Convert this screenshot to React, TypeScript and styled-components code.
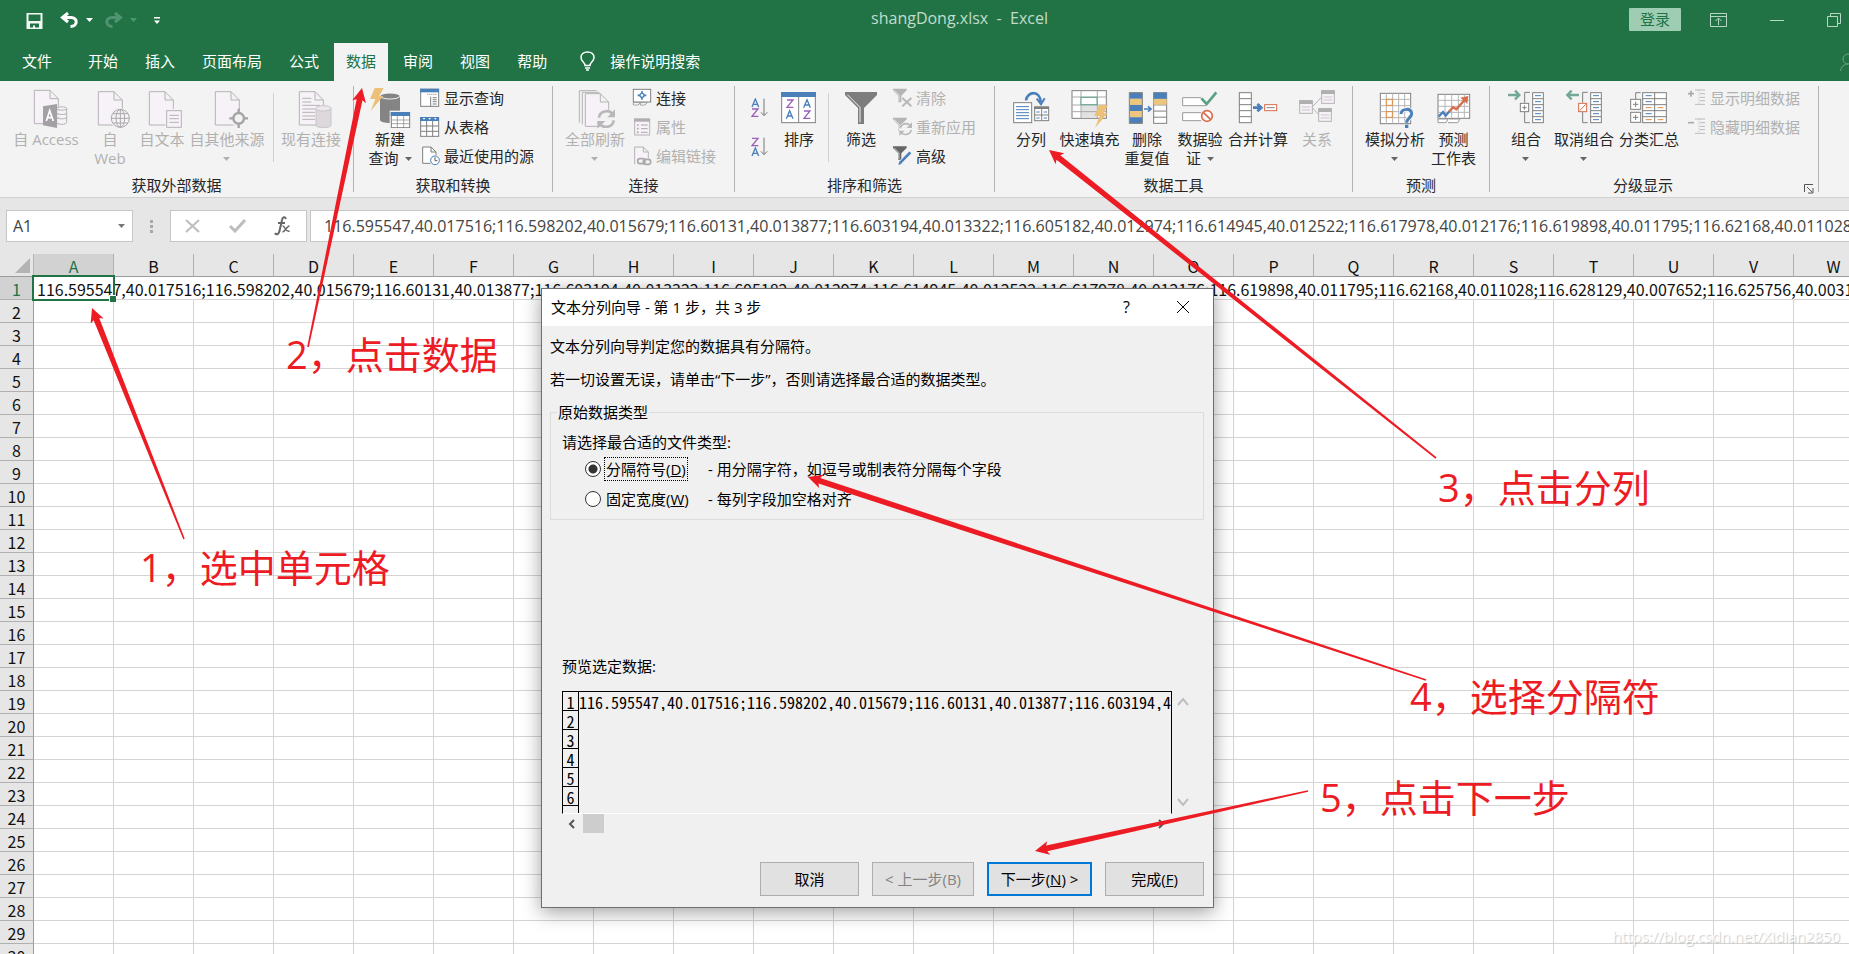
import React from "react";
import styled, { createGlobalStyle, css } from "styled-components";

const GREEN = "#217346";
const UI_FONT = `"Open Sans", "Noto Sans CJK SC", sans-serif`;
const CJK_FONT = `"Noto Sans CJK SC", "Open Sans", sans-serif`;
const BLUE = "#4a7fba";
const GREY = "#7f7f7f";
const FADED = "#b5b3b5";
const PALE = "#f6f2f7";
const RED = "#ed1c24";

const VALUE =
  "116.595547,40.017516;116.598202,40.015679;116.60131,40.013877;116.603194,40.013322;116.605182,40.012974;116.614945,40.012522;116.617978,40.012176;116.619898,40.011795;116.62168,40.011028;116.628129,40.007652;116.625756,40.003176";

const GlobalStyle = createGlobalStyle`
  * { box-sizing: border-box; }
  body { margin: 0; overflow: hidden; font-family: ${UI_FONT}; font-size: 15px; color: #262626; }
  button, input { font: inherit; color: inherit; margin: 0; }
  button { border: 0; padding: 0; background: none; }
  svg { display: block; flex: none; }
  p { margin: 0; }
`;

/* ---------- window frame ---------- */

const Window = styled.div`
  position: relative;
  display: flex;
  flex-direction: column;
  height: 100vh;
  overflow: hidden;
  background: #e6e6e6;
`;

const TitleBar = styled.header`
  display: flex;
  align-items: flex-start;
  height: 43px;
  flex: none;
  padding: 8px 8px 0 0;
  background: ${GREEN};
  color: #c2dccd;
`;

const QuickAccess = styled.div`
  display: flex;
  align-items: center;
  flex: 0 0 290px;
  height: 24px;
  padding-left: 26px;
`;

const QuickButton = styled.button<{ $gap: number }>`
  display: flex;
  margin-right: ${(p) => p.$gap}px;
`;

const DocTitle = styled.h1`
  flex: 1;
  margin: 0;
  font-size: 16px;
  font-weight: 400;
  line-height: 20px;
  text-align: center;
  white-space: pre;
`;

const WindowControls = styled.div`
  display: flex;
  align-items: center;
  gap: 43px;
  height: 23px;
`;

const SignIn = styled.button`
  width: 52px;
  height: 23px;
  margin-right: -14px;
  border-radius: 1px;
  background: #9fcdb3;
  color: ${GREEN};
  line-height: 21px;
`;

const IconButton = styled.button`
  display: flex;
`;

const TabBar = styled.nav`
  display: flex;
  align-items: stretch;
  gap: 3px;
  height: 38px;
  flex: none;
  padding-left: 10px;
  overflow: hidden;
  background: ${GREEN};
`;

const Tab = styled.button<{ $active?: boolean; $file?: boolean }>`
  flex: none;
  padding: 0 12px 3px;
  margin-right: ${(p) => (p.$file ? 9 : 0)}px;
  background: ${(p) => (p.$active ? "#f3f3f3" : "transparent")};
  color: ${(p) => (p.$active ? GREEN : "#fff")};
  line-height: 34px;
`;

const TellMe = styled.button`
  display: flex;
  align-items: center;
  gap: 15px;
  margin-left: 18px;
  padding-bottom: 3px;
  color: #fff;
`;

const Account = styled.button`
  display: flex;
  align-items: center;
  margin-left: auto;
`;

/* ---------- ribbon ---------- */

const Ribbon = styled.section`
  display: flex;
  height: 117px;
  flex: none;
  overflow: hidden;
  background: #f3f3f3;
  border-bottom: 1px solid #d0d0d0;
`;

const Group = styled.div<{ $width: number }>`
  display: flex;
  flex-direction: column;
  flex: none;
  width: ${(p) => p.$width}px;
`;

const GroupBody = styled.div<{ $pad: number }>`
  display: flex;
  height: 94px;
  padding-left: ${(p) => p.$pad}px;
`;

const Caption = styled.div`
  display: flex;
  align-items: center;
  height: 20px;
  line-height: 20px;
`;

const CaptionText = styled.span`
  flex: 1;
  text-align: center;
`;

const Launcher = styled.button`
  display: flex;
  width: 22px;
  padding: 7px 0 0 8px;
`;

const GroupRule = styled.div`
  flex: none;
  width: 1px;
  margin: 5px 0;
  background: #b3b3b3;
`;

const InnerRule = styled.div`
  flex: none;
  width: 1px;
  height: 69px;
  margin: 12px 5px 0;
  background: #d0d0d0;
`;

const BigButton = styled.button<{ $width: number; $off?: boolean }>`
  display: flex;
  flex-direction: column;
  align-items: center;
  gap: 2px;
  flex: none;
  width: ${(p) => p.$width}px;
  padding-top: 7px;
  color: ${(p) => (p.$off ? "#b1b1b1" : "#262626")};
`;

const BigLabel = styled.span`
  display: flex;
  flex-direction: column;
  align-items: center;
  line-height: 19px;
  white-space: nowrap;
`;

const LabelLine = styled.span`
  display: flex;
  align-items: center;
  gap: 6px;
  height: 19px;
`;

const SmallStack = styled.div<{ $gap?: number }>`
  display: flex;
  flex-direction: column;
  padding-top: 2px;
  margin-left: ${(p) => p.$gap ?? 0}px;
`;

const SmallButton = styled.button<{ $off?: boolean }>`
  display: flex;
  align-items: center;
  gap: 4px;
  height: 29px;
  white-space: nowrap;
  color: ${(p) => (p.$off ? "#b1b1b1" : "#262626")};
`;

const SortStack = styled.div`
  display: flex;
  flex-direction: column;
  gap: 19px;
  width: 24px;
  padding-top: 17px;
`;

/* ---------- formula bar ---------- */

const FormulaBar = styled.div`
  display: flex;
  flex: none;
  height: 56px;
  padding: 12px 0 12px 6px;
`;

const fieldBox = css`
  display: flex;
  align-items: center;
  background: #fff;
  border: 1px solid #c6c6c6;
`;

const NameBox = styled.div`
  ${fieldBox}
  flex: none;
  width: 127px;
  padding: 0 7px 0 6px;
`;

const NameInput = styled.input`
  flex: 1;
  min-width: 0;
  padding: 0;
  border: 0;
  outline: 0;
  color: #444;
  font-size: 16px;
`;

const Grip = styled.div`
  display: flex;
  justify-content: center;
  align-items: center;
  flex: none;
  width: 37px;
`;

const FormulaTools = styled.div`
  ${fieldBox}
  flex: none;
  gap: 28px;
  width: 137px;
  padding-left: 13px;
  margin-right: 3px;
`;

const FormulaInput = styled.input`
  ${fieldBox}
  flex: 1;
  min-width: 0;
  padding: 0 0 0 13px;
  border-right: 0;
  outline: 0;
  color: #444;
  font-size: 16px;
`;

/* ---------- sheet ---------- */

const SheetArea = styled.main`
  flex: 1;
  min-height: 0;
  overflow: hidden;
  background: #fff;
`;

const Sheet = styled.table`
  table-layout: fixed;
  width: 1954px;
  border-collapse: separate;
  border-spacing: 0;
  font-family: ${CJK_FONT};
  font-size: 16px;
  line-height: 20px;
  color: #111;
`;

const Corner = styled.td`
  width: 34px;
  height: 23px;
  padding: 0;
  background: #e6e6e6;
  border-right: 1px solid #b5b5b5;
  border-bottom: 1px solid #9b9b9b;
`;

const ColHead = styled.th<{ $on: boolean }>`
  width: 80px;
  height: 23px;
  padding: 2px 0 0;
  font-weight: 400;
  background: ${(p) => (p.$on ? "#d2d2d2" : "#e6e6e6")};
  color: ${(p) => (p.$on ? GREEN : "#111")};
  border-right: 1px solid #b0b0b0;
  border-bottom: 1px solid #9b9b9b;
`;

const RowHead = styled.th<{ $on: boolean }>`
  height: 23px;
  padding: 2px 0 0;
  font-weight: 400;
  background: ${(p) => (p.$on ? "#d2d2d2" : "#e6e6e6")};
  color: ${(p) => (p.$on ? GREEN : "#111")};
  border-right: 1px solid #9b9b9b;
  border-bottom: 1px solid #b0b0b0;
`;

const Cell = styled.td<{ $open?: boolean }>`
  padding: 0;
  border-right: 1px solid ${(p) => (p.$open ? "transparent" : "#d4d4d4")};
  border-bottom: 1px solid #d4d4d4;
`;

const ActiveCell = styled(Cell)`
  position: relative;
  padding: 2px 0 0 3px;
  white-space: nowrap;
  overflow: visible;
`;

const Selection = styled.div`
  position: absolute;
  inset: -2px;
  border: 2px solid ${GREEN};
  &::after {
    content: "";
    position: absolute;
    right: -3px;
    bottom: -3px;
    width: 6px;
    height: 6px;
    background: ${GREEN};
    border: solid #fff;
    border-width: 1px 0 0 1px;
  }
`;

/* ---------- wizard dialog ---------- */

const Dialog = styled.section`
  position: absolute;
  left: 541px;
  top: 288px;
  width: 673px;
  background: #f0f0f0;
  border: 1px solid #6e6e6e;
  box-shadow: 0 4px 18px rgba(0, 0, 0, 0.38);
  color: #000;
  line-height: 20px;
`;

const DialogTitle = styled.div`
  display: flex;
  align-items: center;
  height: 37px;
  padding: 0 23px 2px 9px;
  background: #fff;
`;

const DialogName = styled.h2`
  flex: 1;
  margin: 0;
  font-size: 15px;
  font-weight: 400;
`;

const TitleButton = styled.button`
  display: flex;
  justify-content: center;
  margin-left: 46px;
  font-size: 16px;
`;

const DialogBody = styled.div`
  padding: 10px 9px 11px 8px;
`;

const Line = styled.p`
  margin-bottom: 13px;
`;

const TypeBox = styled.fieldset`
  margin: 13px 0 0;
  padding: 10px 11px 8px;
  border: 1px solid #dcdcdc;
`;

const Legend = styled.legend`
  margin-left: -5px;
  padding: 0 1px;
`;

const Option = styled.div`
  display: flex;
  align-items: center;
  height: 24px;
  margin: 5px 0 6px;
  padding-left: 23px;
  &:last-child { margin-bottom: 0; }
`;

const Radio = styled.input`
  appearance: none;
  width: 16px;
  height: 16px;
  flex: none;
  margin-right: 3px;
  border: 1px solid #333;
  border-radius: 50%;
  background: #fff;
  &:checked { background: radial-gradient(circle, #333 0 4px, #fff 5px); }
`;

const OptionLabel = styled.label`
  width: 104px;
`;

const OptionText = styled.span<{ $focus?: boolean }>`
  display: inline-block;
  padding: 0 1px;
  line-height: 22px;
  border: 1px dotted ${(p) => (p.$focus ? "#000" : "transparent")};
`;

const PreviewLabel = styled.p`
  margin: 136px 0 15px 12px;
`;

const PreviewRow = styled.div`
  display: flex;
  margin-left: 12px;
`;

const PreviewFrame = styled.div`
  width: 610px;
  height: 123px;
  overflow: hidden;
  border: 1px solid #000;
  border-bottom-color: #fff;
`;

const PreviewTable = styled.table`
  table-layout: fixed;
  width: 608px;
  border-spacing: 0;
  font-family: ${CJK_FONT};
  font-feature-settings: "hwid";
  font-size: 16px;
  line-height: 16px;
`;

const PreviewHead = styled.th`
  width: 16px;
  height: 19px;
  padding: 2px 0 0;
  font-weight: 400;
  border-right: 1px solid #000;
  border-bottom: 1px solid #000;
`;

const PreviewCell = styled.td`
  padding: 0;
  overflow: hidden;
  line-height: 18px;
  white-space: nowrap;
`;

const VScroll = styled.div`
  display: flex;
  flex-direction: column;
  justify-content: space-between;
  padding: 7px 0 8px 5px;
`;

const HScroll = styled.div`
  display: flex;
  align-items: center;
  width: 610px;
  height: 19px;
  margin-left: 12px;
  padding: 0 7px 0 6px;
`;

const Thumb = styled.div`
  width: 21px;
  height: 19px;
  margin: 0 auto 0 8px;
  background: #cdcdcd;
`;

const Actions = styled.div`
  display: flex;
  justify-content: flex-end;
  gap: 13px;
  margin-top: 29px;
`;

const ActionButton = styled.button<{ $width: number; $main?: boolean }>`
  width: ${(p) => p.$width}px;
  height: 34px;
  background: #e1e1e1;
  border: ${(p) => (p.$main ? "2px solid #0078d7" : "1px solid #adadad")};
  white-space: pre;
  &:disabled { color: #838383; }
`;

/* ---------- annotations ---------- */

const Overlay = styled.div`
  position: absolute;
  inset: 0;
  overflow: hidden;
  pointer-events: none;
`;

const Note = styled.span<{ $x: number; $y: number }>`
  position: absolute;
  left: ${(p) => p.$x}px;
  top: ${(p) => p.$y}px;
  color: ${RED};
  font-size: 38px;
  line-height: 48px;
  white-space: nowrap;
`;

const Watermark = styled.span`
  position: absolute;
  right: 9px;
  bottom: 6px;
  font-size: 15px;
  line-height: 24px;
  color: rgba(255, 255, 255, 0.9);
  text-shadow: 1px 1px 1px rgba(0, 0, 0, 0.22);
`;

/* ---------- icons ---------- */

const Big = ({ x, children }: { x: number; children: React.ReactNode }) => (
  <svg width="48" height="40" viewBox={`${x} 24 144 120`} fill="none" strokeWidth="3" aria-hidden>
    {children}
  </svg>
);

const Small = ({ x, y, children }: { x: number; y: number; children: React.ReactNode }) => (
  <svg width="20" height="20" viewBox={`${x} ${y} 60 60`} fill="none" strokeWidth="3" aria-hidden>
    {children}
  </svg>
);

const Caret = ({ color = "#666" }: { color?: string }) => (
  <svg width="7" height="4" viewBox="0 0 7 4" aria-hidden>
    <path d="M0 0H7L3.5 4Z" fill={color} />
  </svg>
);

const Page = ({ x, y, w = 72, h = 100 }: { x: number; y: number; w?: number; h?: number }) => (
  <path
    d={`M${x} ${y}h${w - 25}l25 25v${h - 25}h${-w}ZM${x + w - 25} ${y}v25h25`}
    fill={PALE}
    stroke={FADED}
  />
);

const Rows = ({ x, y, w, h, n, stroke = GREY }: { x: number; y: number; w: number; h: number; n: number; stroke?: string }) => (
  <>
    <rect x={x} y={y} width={w} height={h} fill="#fff" stroke={stroke} />
    {Array.from({ length: n - 1 }, (_, i) => (
      <path key={i} d={`M${x} ${y + ((i + 1) * h) / n}h${w}`} stroke={stroke} />
    ))}
  </>
);

const AccessIcon = () => (
  <Big x={66}>
    <Page x={103} y={31} />
    <path d="M170 85c0-6 30-6 30 0v42c0 8-30 8-30 0ZM170 86c0 6 30 6 30 0M170 99c0 6 30 6 30 0M170 112c0 6 30 6 30 0" fill={PALE} stroke={FADED} />
    <path d="M129 79L171 72V144L129 136Z" fill="#a3a1a3" />
    <path d="M139 123L149 92L160 123M143 113H157" stroke="#fff" strokeWidth="5" />
  </Big>
);

const WebIcon = () => (
  <Big x={258}>
    <Page x={295} y={35} />
    <circle cx="361" cy="115" r="31" fill="#f3f3f3" />
    <g stroke="#aaa8aa">
      <circle cx="361" cy="115" r="27" fill={PALE} />
      <ellipse cx="361" cy="115" rx="13" ry="27" />
      <path d="M361 88V142M334 115H388M339 101H383M339 129H383" />
    </g>
  </Big>
);

const TextIcon = () => (
  <Big x={414}>
    <Page x={448} y={35} />
    <rect x="496" y="87" width="53" height="60" fill="#f3f3f3" />
    <rect x="500" y="92" width="44" height="50" fill={PALE} stroke={FADED} />
    <path d="M508 106H537M508 116H537M508 127H537" stroke={FADED} />
  </Big>
);

const SourcesIcon = () => (
  <Big x={609}>
    <Page x={646} y={35} />
    <circle cx="716" cy="115" r="25" fill="#f3f3f3" />
    <circle cx="716" cy="115" r="16" stroke="#a5a3a5" strokeWidth="7" />
    <path d="M716 86V102M716 128V144M688 115H703M729 115H744" stroke="#a5a3a5" strokeWidth="7" />
  </Big>
);

const ExistingIcon = () => (
  <Big x={861}>
    <Page x={898} y={35} />
    <path d="M907 55H934M907 66H934M907 76H960M907 87H945M907 97H945M907 108H945M907 118H945" stroke={FADED} />
    <path d="M948 84V136C948 145 993 145 993 136V84" fill="#dcd8dc" stroke="#c9c5c9" />
    <ellipse cx="970" cy="85" rx="23" ry="8" fill="#ece8ec" stroke="#c9c5c9" />
  </Big>
);

const Bolt = ({ x, y }: { x: number; y: number }) => (
  <path d={`M${x + 14} ${y}h27l-13 24h12l-38 45 14-36h-16Z`} fill="#ecc079" />
);

const NewQueryIcon = () => (
  <Big x={48}>
    <path d="M90 46V120C90 132 150 132 150 120V46" fill="#848484" />
    <ellipse cx="120" cy="48" rx="30" ry="9" fill="#848484" stroke="#f3f3f3" />
    <Bolt x={60} y={24} />
    <rect x="119" y="92" width="64" height="54" fill="#f3f3f3" />
    <rect x="124" y="98" width="55" height="45" fill="#fff" stroke={GREY} />
    <rect x="122" y="96" width="58" height="12" fill={BLUE} />
    <path d="M142 108V143M161 108V143M124 120H179M124 131H179" stroke={GREY} strokeWidth="2" />
  </Big>
);

const ShowQueryIcon = () => (
  <Small x={210} y={25}>
    <rect x="212" y="29" width="54" height="51" fill="#fff" stroke={GREY} />
    <rect x="210" y="27" width="57" height="11" fill={BLUE} />
    <path d="M242 51V80M248 54H260M248 60H260M248 66H260M248 73H260" stroke={GREY} />
    <path d="M232 44H262" stroke={GREY} strokeDasharray="3 3" />
  </Small>
);

const FromTableIcon = () => (
  <Small x={210} y={112}>
    <rect x="212" y="114" width="54" height="56" fill="#fff" stroke={GREY} />
    <rect x="210" y="112" width="57" height="12" fill={BLUE} />
    <path d="M218 115h8l-4 5ZM235 115h8l-4 5ZM252 115h8l-4 5Z" fill="#fff" />
    <path d="M230 124V170M248 124V170M212 139H266M212 155H266" stroke={GREY} />
  </Small>
);

const RecentIcon = () => (
  <Small x={210} y={200}>
    <path d="M218 203H243L258 218V252H218ZM243 203V218H258" fill="#fff" stroke={GREY} />
    <circle cx="255" cy="243" r="17" fill="#f3f3f3" />
    <circle cx="255" cy="243" r="13" fill="#fff" stroke={BLUE} />
    <path d="M255 234V244H262" stroke="#555" />
  </Small>
);

const RefreshIcon = () => (
  <Big x={663}>
    <path d="M688 128V32H740M697 133V37H748" stroke={FADED} />
    <Page x={706} y={41} w={70} h={98} />
    <circle cx="769" cy="117" r="29" fill="#f3f3f3" />
    <path d="M747 113C749 93 776 87 788 102M791 121C789 142 761 147 750 132" stroke="#b9b7b9" strokeWidth="8" />
    <path d="M795 88V112H772ZM742 146V123H766Z" fill="#b9b7b9" />
  </Big>
);

const ConnectIcon = () => (
  <Small x={846} y={25}>
    <rect x="850" y="29" width="52" height="38" fill="#fff" stroke={GREY} />
    <circle cx="876" cy="47" r="6" stroke={BLUE} strokeWidth="4" />
    <path d="M876 34V41M876 53V60M863 47H870M882 47H889" stroke={BLUE} strokeWidth="5" />
    <path d="M850 69H871L864 76H850ZM873 69H892L885 76H870Z" fill="#fff" stroke={GREY} strokeWidth="2" />
  </Small>
);

const PropsIcon = () => (
  <Small x={846} y={112}>
    <rect x="854" y="119" width="45" height="47" fill={PALE} stroke={FADED} />
    <rect x="852" y="116" width="48" height="10" fill="#b0aeb0" />
    <path d="M873 136H893M873 147H893M873 158H893" stroke="#aaa8aa" />
    <path d="M861 136H866M861 147H866M861 158H866" stroke="#aaa8aa" strokeWidth="5" />
  </Small>
);

const EditLinksIcon = () => (
  <Small x={846} y={200}>
    <path d="M854 254V203H880L895 218V236M880 203V218H895" fill={PALE} stroke={FADED} />
    <rect x="863" y="238" width="22" height="15" rx="7" stroke="#aaa8aa" strokeWidth="5" />
    <rect x="880" y="240" width="22" height="15" rx="7" stroke="#aaa8aa" strokeWidth="5" />
  </Small>
);

const SORT_A = "M-10 12L0 -12L10 12M-7 4H7";
const SORT_Z = "M-9 -11H9L-9 11H10";

const SortIcon = ({ down }: { down: boolean }) => (
  <svg width="18" height="20" viewBox="0 0 54 60" fill="none" strokeWidth="4" aria-hidden>
    <path d={SORT_A} transform={`translate(13 ${down ? 15 : 45})`} stroke={BLUE} />
    <path d={SORT_Z} transform={`translate(12 ${down ? 44 : 15})`} stroke="#9a5fb8" />
    <path d="M39 2V52M30 43L39 53L49 43" stroke="#777" strokeWidth="3" />
  </svg>
);

const SortDialogIcon = () => (
  <Big x={135}>
    <rect x="155" y="38" width="101" height="90" fill="#fff" stroke={GREY} />
    <rect x="153" y="36" width="105" height="15" fill={BLUE} />
    <path d="M206 51V128" stroke={GREY} />
    <g strokeWidth="4">
      <path d={SORT_Z} transform="translate(180 71)" stroke="#9a5fb8" />
      <path d={SORT_A} transform="translate(179 104)" stroke={BLUE} />
      <path d={SORT_A} transform="translate(231 71)" stroke={BLUE} />
      <path d={SORT_Z} transform="translate(231 104)" stroke="#9a5fb8" />
    </g>
  </Big>
);

const FilterIcon = () => (
  <Big x={324}>
    <path d="M348 36H444V45L405 84V132H387V84L348 45Z" fill="#7d7d7d" />
    <path d="M355 44L393 82V127" stroke="#f3f3f3" />
  </Big>
);

const Funnel = ({ y, color }: { y: number; color: string }) => (
  <path d={`M489 ${y}h41v5l-16 16v20h-9v-20l-16-16Z`} fill={color} />
);

const ClearIcon = () => (
  <Small x={486} y={25}>
    <Funnel y={27} color={FADED} />
    <path d="M493 32L507 46V66" stroke="#f3f3f3" strokeWidth="2" />
    <path d="M517 55L544 80M544 55L517 80" stroke="#b9b7b9" strokeWidth="6" />
  </Small>
);

const ReapplyIcon = () => (
  <Small x={486} y={112}>
    <Funnel y={114} color={FADED} />
    <path d="M493 119L507 133V153" stroke="#f3f3f3" strokeWidth="2" />
    <circle cx="527" cy="148" r="20" fill="#f3f3f3" />
    <path d="M511 146C513 131 533 128 541 138M544 151C541 166 521 168 514 159" stroke="#b9b7b9" strokeWidth="5" />
    <path d="M546 128V145H530ZM508 169V153H524Z" fill="#b9b7b9" />
  </Small>
);

const AdvancedIcon = () => (
  <Small x={486} y={200}>
    <Funnel y={201} color="#666" />
    <path d="M493 206L507 220V240" stroke="#f3f3f3" strokeWidth="2" />
    <path d="M540 221L511 250" stroke="#f3f3f3" strokeWidth="13" />
    <path d="M541 219L511 250" stroke={BLUE} strokeWidth="8" />
    <path d="M505 257L508 246L515 253Z" fill={BLUE} />
  </Small>
);

const SplitIcon = () => (
  <Big x={831}>
    <path d="M888 61C892 34 930 29 932 66" stroke={BLUE} strokeWidth="8" />
    <path d="M920 56L933 73L944 55" stroke={BLUE} strokeWidth="6" />
    <rect x="851" y="68" width="54" height="60" fill="#fff" stroke={GREY} />
    <path d="M858 80H897M858 89H897M858 98H897M858 107H897M858 116H897" stroke={BLUE} />
    <rect x="914" y="82" width="42" height="40" fill="#fff" stroke={GREY} />
    <path d="M912 83H957" stroke={GREY} strokeWidth="8" />
    <path d="M935 86V122M914 105H956" stroke={GREY} />
    <path d="M919 96H929M941 96H951M919 114H929M941 114H951" stroke={BLUE} />
  </Big>
);

const FlashIcon = () => (
  <Big x={1006}>
    <rect x="1024" y="32" width="103" height="83" fill="#fff" stroke={GREY} />
    <rect x="1052" y="76" width="47" height="38" fill="#e2e2e2" />
    <path d="M1051 32V115M1100 32V115M1024 51H1127M1024 75H1127M1024 95H1127" stroke="#a8a8a8" />
    <rect x="1051" y="52" width="48" height="22" fill="#fff" stroke="#5aa184" />
    <Bolt x={1091} y={75} />
  </Big>
);

const DedupeIcon = () => (
  <Big x={39}>
    {["#4a7fba", "#ecc67c", "#4a7fba", "#ecc67c", "#4a7fba"].map((c, i) => (
      <rect key={i} x="59" y={38 + i * 18.4} width="38" height="18.4" fill={c} />
    ))}
    <rect x="58" y="38" width="39" height="92" stroke={GREY} />
    <Rows x={131} y={38} w={39} h={92} n={5} />
    <rect x="131" y="38" width="39" height="18" fill={BLUE} />
    <rect x="131" y="57" width="39" height="17" fill="#ecc67c" />
    <path d="M102 87H120M114 79L123 87L114 95" stroke={BLUE} strokeWidth="5" />
  </Big>
);

const ValidateIcon = () => (
  <Big x={198}>
    <path d="M273 53H218V77H288M273 98H218V122H273" fill="#fff" stroke="#999" />
    <path d="M274 55L290 72L319 37" stroke="#5aa184" strokeWidth="8" />
    <circle cx="291" cy="108" r="16" fill="#fff" stroke="#d86b4a" strokeWidth="5" />
    <path d="M280 97L302 119" stroke="#d86b4a" strokeWidth="5" />
  </Big>
);

const ConsolidateIcon = () => (
  <Big x={372}>
    <Rows x={388} y={38} w={36} h={90} n={5} />
    <path d="M429 83H450M442 72L454 83L442 94" stroke={BLUE} strokeWidth="8" />
    <rect x="464" y="74" width="36" height="18" fill="#fff" stroke="#d86b4a" />
    <path d="M470 83H494" stroke={GREY} />
  </Big>
);

const RelationIcon = () => (
  <Big x={549}>
    <path d="M608 79L636 50M608 84L626 104" stroke={FADED} />
    {[[569, 62], [635, 32], [626, 86]].map(([x, y]) => (
      <g key={x}>
        <rect x={x} y={y} width="38" height="38" fill={PALE} stroke={FADED} />
        <rect x={x - 1} y={y - 1} width="40" height="11" fill="#b0aeb0" />
        <path d={`M${x + 6} ${y + 19}h26M${x + 6} ${y + 28}h26`} stroke="#c9c5c9" />
      </g>
    ))}
  </Big>
);

const WhatIfIcon = () => (
  <Big x={783}>
    <rect x="811" y="40" width="91" height="91" fill="#fff" stroke={GREY} />
    <path d="M829 40V131M848 40V131M866 40V131M884 40V131M811 58H902M811 77H902M811 95H902M811 113H902" stroke="#b5b5b5" />
    <rect x="829" y="58" width="18" height="18" fill="#fff" stroke="#e08a3c" />
    <rect x="829" y="95" width="18" height="17" fill="#fff" stroke="#e08a3c" />
    <path d="M873 101C874 84 907 83 905 102C903 115 890 114 890 128" stroke="#f3f3f3" strokeWidth="15" />
    <path d="M873 102C874 84 907 83 905 102C903 115 890 114 890 128" stroke={BLUE} strokeWidth="9" />
    <rect x="885" y="134" width="10" height="10" fill={BLUE} />
  </Big>
);

const ForecastIcon = () => (
  <Big x={959}>
    <rect x="983" y="43" width="95" height="72" fill="#fff" stroke={GREY} />
    <path d="M1004 43V115M1024 43V115M1044 43V115M1062 43V115M983 61H1078M983 79H1078M983 97H1078" stroke="#b5b5b5" />
    <path d="M983 117H1013L1007 128H983ZM1017 117H1049L1042 128H1013" fill="#fff" stroke="#999" />
    <path d="M985 110L998 96L1006 107L1018 93" stroke={BLUE} strokeWidth="7" />
    <path d="M1016 95L1028 82L1038 88L1066 56" stroke="#d86b4a" strokeWidth="7" />
    <path d="M1050 53L1074 48L1071 72" fill="#d86b4a" />
  </Big>
);

const DashRows = ({ x }: { x: number }) => (
  <>
    {Array.from({ length: 5 }, (_, i) => (
      <path key={i} d={`M${x} ${47 + i * 18}h18`} stroke={BLUE} />
    ))}
  </>
);

const GroupIcon = () => (
  <Big x={66}>
    <path d="M84 45H116M105 32L118 45L105 58" stroke="#72a894" strokeWidth="7" />
    <path d="M150 37H134V68M134 96V128H150" stroke={GREY} />
    <rect x="121" y="70" width="25" height="25" fill="#fff" stroke={GREY} />
    <path d="M127 83H140M133 76V89" stroke={GREY} />
    <Rows x={158} y={38} w={32} h={90} n={5} />
    <DashRows x={165} />
  </Big>
);

const UngroupIcon = () => (
  <Big x={240}>
    <path d="M264 45H297M275 32L262 45L275 58" stroke="#72a894" strokeWidth="7" />
    <path d="M323 37H308V68M308 96V128H323" stroke={GREY} />
    <rect x="296" y="70" width="24" height="25" fill="#fff" stroke="#d86b4a" />
    <path d="M299 92L317 73" stroke="#d86b4a" />
    <Rows x={332} y={38} w={32} h={90} n={5} />
    <DashRows x={339} />
  </Big>
);

const SubtotalIcon = () => (
  <Big x={435}>
    <path d="M482 38H467V60" stroke={GREY} />
    <rect x="452" y="58" width="30" height="30" fill="#fff" stroke={GREY} />
    <rect x="452" y="97" width="30" height="30" fill="#fff" stroke={GREY} />
    <path d="M459 73H475M467 65V81M459 112H475M467 104V120" stroke={GREY} />
    <Rows x={488} y={38} w={71} h={90} n={5} />
    <path d="M524 38V128" stroke={GREY} />
    <path d="M497 47H515M497 65H515M497 101H515" stroke={BLUE} />
    <path d="M497 83H515M533 83H550M497 119H515M533 119H550" stroke="#e08a3c" />
  </Big>
);

const DetailIcon = ({ plus }: { plus: boolean }) => (
  <Small x={618} y={25}>
    <path d={plus ? "M624 42H642M633 33V51" : "M624 42H642"} stroke="#aaa" strokeWidth="5" />
    <path d="M645 31H675M645 74H675M660 42H675M660 53H675M660 63H675" stroke="#bbb" />
    <path d="M657 31V74" stroke="#bbb" strokeDasharray="3 4" />
  </Small>
);

/* ---------- pieces ---------- */

type Item = { icon: React.ReactNode; lines: string[]; width: number; off?: boolean; menu?: boolean };

const RibbonButton = ({ icon, lines, width, off, menu }: Item) => (
  <BigButton $width={width} $off={off}>
    {icon}
    <BigLabel>
      {lines.map((line, i) => (
        <LabelLine key={i}>
          {line}
          {menu && i === 1 && <Caret color={off ? "#b1b1b1" : "#666"} />}
        </LabelLine>
      ))}
    </BigLabel>
  </BigButton>
);

const RibbonGroup = ({ title, width, pad, launcher, children }: { title: string; width: number; pad: number; launcher?: boolean; children: React.ReactNode }) => (
  <>
    <Group $width={width}>
      <GroupBody $pad={pad}>{children}</GroupBody>
      <Caption>
        <CaptionText>{title}</CaptionText>
        {launcher && (
          <Launcher aria-label={title}>
            <svg width="10" height="10" viewBox="0 0 10 10" fill="none" stroke="#555" aria-hidden>
              <path d="M.5 8V.5H9M3 3L8 8M9 4V9H4" />
            </svg>
          </Launcher>
        )}
      </Caption>
    </Group>
    <GroupRule />
  </>
);

const Arrow = ({ from, to }: { from: [number, number]; to: [number, number] }) => {
  const dx = from[0] - to[0];
  const dy = from[1] - to[1];
  const len = Math.hypot(dx, dy);
  const at = (along: number, side: number) =>
    `${to[0] + (dx * along - dy * side) / len},${to[1] + (dy * along + dx * side) / len}`;
  const points = [at(0, 0), at(14, 7), at(12, 3), at(len, 0.8), at(len, -0.8), at(12, -3), at(14, -7)];
  return <polygon points={points.join(" ")} fill={RED} />;
};

const tabs = ["文件", "开始", "插入", "页面布局", "公式", "数据", "审阅", "视图", "帮助"];
const columns = "ABCDEFGHIJKLMNOPQRSTUVWX".split("");
const rows = Array.from({ length: 40 }, (_, i) => i + 1);

const Chevron = ({ d, color, w, h }: { d: string; color: string; w: number; h: number }) => (
  <svg width={w} height={h} viewBox={`0 0 ${w} ${h}`} fill="none" stroke={color} strokeWidth="2" aria-hidden>
    <path d={d} />
  </svg>
);

export default function App() {
  return (
    <Window>
      <GlobalStyle />
      <TitleBar>
        <QuickAccess>
          <QuickButton $gap={17} aria-label="保存">
            <svg width="17" height="17" viewBox="0 0 17 17" aria-hidden>
              <path d="M.5 1H16.5V17H.5ZM2.5 2.5V9H14.5V2.5ZM4 11.500V15.500H7V13.500H9V15.500H13V11.500Z" fill="#f2f7f4" fillRule="evenodd" />
            </svg>
          </QuickButton>
          <QuickButton $gap={7} aria-label="撤消">
            <svg width="19" height="16" viewBox="0 0 19 16" fill="none" stroke="#fff" strokeWidth="3" aria-hidden>
              <path d="M8 1L2.500 5.500L8 10M3 5.500H11C18 5.500 18 14.500 10.500 14.500" />
            </svg>
          </QuickButton>
          <QuickButton $gap={11} aria-label="撤消选项"><Caret color="#fff" /></QuickButton>
          <QuickButton $gap={7} aria-label="恢复">
            <svg width="19" height="16" viewBox="0 0 19 16" fill="none" stroke="#4f9470" strokeWidth="3" aria-hidden>
              <path d="M11 1L16.500 5.500L11 10M16 5.500H8C1 5.500 1 14.500 8.500 14.500" />
            </svg>
          </QuickButton>
          <QuickButton $gap={17} aria-label="恢复选项"><Caret color="#4f9470" /></QuickButton>
          <QuickButton $gap={0} aria-label="自定义快速访问工具栏">
            <svg width="6" height="7" viewBox="0 0 6 7" aria-hidden>
              <path d="M0 0H6V1.500H0ZM0 3.500H6L3 7Z" fill="#fff" />
            </svg>
          </QuickButton>
        </QuickAccess>
        <DocTitle>{"shangDong.xlsx  -  Excel"}</DocTitle>
        <WindowControls>
          <SignIn>登录</SignIn>
          <IconButton aria-label="功能区显示选项">
            <svg width="17" height="14" viewBox="0 0 17 14" fill="none" stroke="#b5d8c4" aria-hidden>
              <path d="M.5 .5H16.500V13.500H.5ZM.5 3.500H16.500M8.500 12V5.500M5.500 8L8.500 5L11.500 8" />
            </svg>
          </IconButton>
          <IconButton aria-label="最小化">
            <svg width="14" height="14" viewBox="0 0 14 14" stroke="#b5d8c4" aria-hidden>
              <path d="M0 7.500H14" />
            </svg>
          </IconButton>
          <IconButton aria-label="向下还原">
            <svg width="14" height="14" viewBox="0 0 14 14" fill="none" stroke="#b5d8c4" aria-hidden>
              <path d="M.5 3.500H10.500V13.500H.5ZM3.500 3.500V.5H13.500V10.500H10.500" />
            </svg>
          </IconButton>
        </WindowControls>
      </TitleBar>
      <TabBar>
        {tabs.map((t) => (
          <Tab key={t} $active={t === "数据"} $file={t === "文件"}>{t}</Tab>
        ))}
        <TellMe>
          <svg width="15" height="20" viewBox="0 0 15 20" fill="none" stroke="#fff" strokeWidth="1.500" aria-hidden>
            <path d="M5 14.500C5 11.500 1 10.500 1 6.500C1 3 4 1 7.500 1S14 3 14 6.500C14 10.500 10 11.500 10 14.500ZM5 17H10M6 19H9" />
          </svg>
          操作说明搜索
        </TellMe>
        <Account aria-label="共享">
          <svg width="9" height="20" viewBox="0 0 9 20" fill="none" stroke="#6aa585" aria-hidden>
            <circle cx="8" cy="7" r="5" />
            <path d="M.5 19C1 15 4 12 8 12" />
          </svg>
        </Account>
      </TabBar>

      <Ribbon>
        <RibbonGroup title="获取外部数据" width={353} pad={10}>
          <RibbonButton icon={<AccessIcon />} lines={["自 Access"]} width={72} off />
          <RibbonButton icon={<WebIcon />} lines={["自", "Web"]} width={56} off />
          <RibbonButton icon={<TextIcon />} lines={["自文本"]} width={48} off />
          <RibbonButton icon={<SourcesIcon />} lines={["自其他来源", ""]} width={82} off menu />
          <InnerRule />
          <RibbonButton icon={<ExistingIcon />} lines={["现有连接"]} width={64} off />
        </RibbonGroup>
        <RibbonGroup title="获取和转换" width={198} pad={6}>
          <RibbonButton icon={<NewQueryIcon />} lines={["新建", "查询"]} width={60} menu />
          <SmallStack>
            <SmallButton><ShowQueryIcon />显示查询</SmallButton>
            <SmallButton><FromTableIcon />从表格</SmallButton>
            <SmallButton><RecentIcon />最近使用的源</SmallButton>
          </SmallStack>
        </RibbonGroup>
        <RibbonGroup title="连接" width={181} pad={10}>
          <RibbonButton icon={<RefreshIcon />} lines={["全部刷新", ""]} width={64} off menu />
          <SmallStack $gap={5}>
            <SmallButton><ConnectIcon />连接</SmallButton>
            <SmallButton $off><PropsIcon />属性</SmallButton>
            <SmallButton $off><EditLinksIcon />编辑链接</SmallButton>
          </SmallStack>
        </RibbonGroup>
        <RibbonGroup title="排序和筛选" width={259} pad={16}>
          <SortStack>
            <IconButton aria-label="升序"><SortIcon down /></IconButton>
            <IconButton aria-label="降序"><SortIcon down={false} /></IconButton>
          </SortStack>
          <RibbonButton icon={<SortDialogIcon />} lines={["排序"]} width={48} />
          <InnerRule />
          <RibbonButton icon={<FilterIcon />} lines={["筛选"]} width={54} />
          <SmallStack $gap={4}>
            <SmallButton $off><ClearIcon />清除</SmallButton>
            <SmallButton $off><ReapplyIcon />重新应用</SmallButton>
            <SmallButton><AdvancedIcon />高级</SmallButton>
          </SmallStack>
        </RibbonGroup>
        <RibbonGroup title="数据工具" width={357} pad={7}>
          <RibbonButton icon={<SplitIcon />} lines={["分列"]} width={58} />
          <RibbonButton icon={<FlashIcon />} lines={["快速填充"]} width={59} />
          <RibbonButton icon={<DedupeIcon />} lines={["删除", "重复值"]} width={56} />
          <RibbonButton icon={<ValidateIcon />} lines={["数据验", "证"]} width={50} menu />
          <RibbonButton icon={<ConsolidateIcon />} lines={["合并计算"]} width={66} />
          <RibbonButton icon={<RelationIcon />} lines={["关系"]} width={52} off />
        </RibbonGroup>
        <RibbonGroup title="预测" width={136} pad={10}>
          <RibbonButton icon={<WhatIfIcon />} lines={["模拟分析", ""]} width={64} menu />
          <RibbonButton icon={<ForecastIcon />} lines={["预测", "工作表"]} width={53} />
        </RibbonGroup>
        <RibbonGroup title="分级显示" width={328} pad={10} launcher>
          <RibbonButton icon={<GroupIcon />} lines={["组合", ""]} width={52} menu />
          <RibbonButton icon={<UngroupIcon />} lines={["取消组合", ""]} width={64} menu />
          <RibbonButton icon={<SubtotalIcon />} lines={["分类汇总"]} width={66} />
          <SmallStack $gap={4}>
            <SmallButton $off><DetailIcon plus />显示明细数据</SmallButton>
            <SmallButton $off><DetailIcon plus={false} />隐藏明细数据</SmallButton>
          </SmallStack>
        </RibbonGroup>
      </Ribbon>

      <FormulaBar>
        <NameBox>
          <NameInput aria-label="名称框" defaultValue="A1" />
          <Caret color="#777" />
        </NameBox>
        <Grip>
          <svg width="3" height="13" viewBox="0 0 3 13" fill="#a8a8a8" aria-hidden>
            <path d="M0 0H3V3H0ZM0 5H3V8H0ZM0 10H3V13H0Z" />
          </svg>
        </Grip>
        <FormulaTools>
          <IconButton aria-label="取消">
            <svg width="17" height="14" viewBox="0 0 17 14" stroke="#bdbdbd" strokeWidth="2" aria-hidden>
              <path d="M2 1L15 13M15 1L2 13" />
            </svg>
          </IconButton>
          <IconButton aria-label="输入">
            <svg width="17" height="14" viewBox="0 0 17 14" fill="none" stroke="#bdbdbd" strokeWidth="3" aria-hidden>
              <path d="M1 7L6 12L16 1" />
            </svg>
          </IconButton>
          <IconButton aria-label="插入函数">
            <svg width="18" height="20" viewBox="0 0 18 20" fill="none" stroke="#666" strokeWidth="2" aria-hidden>
              <path d="M12 3C11 0 8.500 1 8 4L5.500 15C4.500 19 2 19 1 17M4 7H11" />
              <path d="M8.500 10C11 9 11.500 17 15.500 15M15.500 10C12.500 10 11 16 8.500 16" strokeWidth="1.500" />
            </svg>
          </IconButton>
        </FormulaTools>
        <FormulaInput aria-label="编辑栏" defaultValue={VALUE} />
      </FormulaBar>

      <SheetArea>
        <Sheet>
          <thead>
            <tr>
              <Corner>
                <svg width="33" height="22" viewBox="0 0 33 22" aria-hidden>
                  <path d="M30 4V19H15Z" fill="#b3b3b3" />
                </svg>
              </Corner>
              {columns.map((c) => (
                <ColHead key={c} scope="col" $on={c === "A"}>{c}</ColHead>
              ))}
            </tr>
          </thead>
          <tbody>
            {rows.map((r) => (
              <tr key={r}>
                <RowHead scope="row" $on={r === 1}>{r}</RowHead>
                {columns.map((c) =>
                  r === 1 && c === "A" ? (
                    <ActiveCell key={c} $open>
                      {VALUE}
                      <Selection />
                    </ActiveCell>
                  ) : (
                    <Cell key={c} $open={r === 1} />
                  )
                )}
              </tr>
            ))}
          </tbody>
        </Sheet>
      </SheetArea>

      <Dialog role="dialog" aria-labelledby="wizard-title">
        <DialogTitle>
          <DialogName id="wizard-title">文本分列向导 - 第 1 步，共 3 步</DialogName>
          <TitleButton aria-label="帮助">?</TitleButton>
          <TitleButton aria-label="关闭">
            <svg width="14" height="14" viewBox="0 0 14 14" stroke="#000" aria-hidden>
              <path d="M1 1L13 13M13 1L1 13" />
            </svg>
          </TitleButton>
        </DialogTitle>
        <DialogBody>
          <Line>文本分列向导判定您的数据具有分隔符。</Line>
          <p>若一切设置无误，请单击“下一步”，否则请选择最合适的数据类型。</p>
          <TypeBox>
            <Legend>原始数据类型</Legend>
            <p>请选择最合适的文件类型:</p>
            <Option>
              <Radio type="radio" name="kind" id="kind-delimited" defaultChecked />
              <OptionLabel htmlFor="kind-delimited">
                <OptionText $focus>分隔符号(<u>D</u>)</OptionText>
              </OptionLabel>
              <span>- 用分隔字符，如逗号或制表符分隔每个字段</span>
            </Option>
            <Option>
              <Radio type="radio" name="kind" id="kind-fixed" />
              <OptionLabel htmlFor="kind-fixed">
                <OptionText>固定宽度(<u>W</u>)</OptionText>
              </OptionLabel>
              <span>- 每列字段加空格对齐</span>
            </Option>
          </TypeBox>
          <PreviewLabel>预览选定数据:</PreviewLabel>
          <PreviewRow>
            <PreviewFrame>
              <PreviewTable>
                <tbody>
                  {["1", "2", "3", "4", "5", "6", ""].map((n) => (
                    <tr key={n}>
                      <PreviewHead scope="row">{n}</PreviewHead>
                      <PreviewCell>{n === "1" ? VALUE.slice(0, 75) : ""}</PreviewCell>
                    </tr>
                  ))}
                </tbody>
              </PreviewTable>
            </PreviewFrame>
            <VScroll>
              <Chevron d="M1 7L6 1L11 7" color="#bfbfbf" w={12} h={8} />
              <Chevron d="M1 1L6 7L11 1" color="#bfbfbf" w={12} h={8} />
            </VScroll>
          </PreviewRow>
          <HScroll>
            <Chevron d="M6 1L2 5L6 9" color="#555" w={7} h={10} />
            <Thumb />
            <Chevron d="M1 1L5 5L1 9" color="#555" w={7} h={10} />
          </HScroll>
          <Actions>
            <ActionButton $width={99}>取消</ActionButton>
            <ActionButton $width={102} disabled>{"< 上一步(B)"}</ActionButton>
            <ActionButton $width={105} $main>下一步(<u>N</u>) {">"}</ActionButton>
            <ActionButton $width={99}>完成(<u>F</u>)</ActionButton>
          </Actions>
        </DialogBody>
      </Dialog>

      <Overlay>
        <svg width="100%" height="100%" aria-hidden>
          <Arrow from={[184, 539]} to={[92, 308]} />
          <Arrow from={[308, 347]} to={[362, 88]} />
          <Arrow from={[1436, 458]} to={[1049, 150]} />
          <Arrow from={[1426, 680]} to={[808, 477]} />
          <Arrow from={[1308, 791]} to={[1035, 851]} />
        </svg>
        <Note $x={140} $y={543}>1，选中单元格</Note>
        <Note $x={286} $y={330}>2，点击数据</Note>
        <Note $x={1438} $y={463}>3，点击分列</Note>
        <Note $x={1410} $y={672}>4，选择分隔符</Note>
        <Note $x={1320} $y={773}>5，点击下一步</Note>
        <Watermark>https://blog.csdn.net/Xidian2850</Watermark>
      </Overlay>
    </Window>
  );
}
